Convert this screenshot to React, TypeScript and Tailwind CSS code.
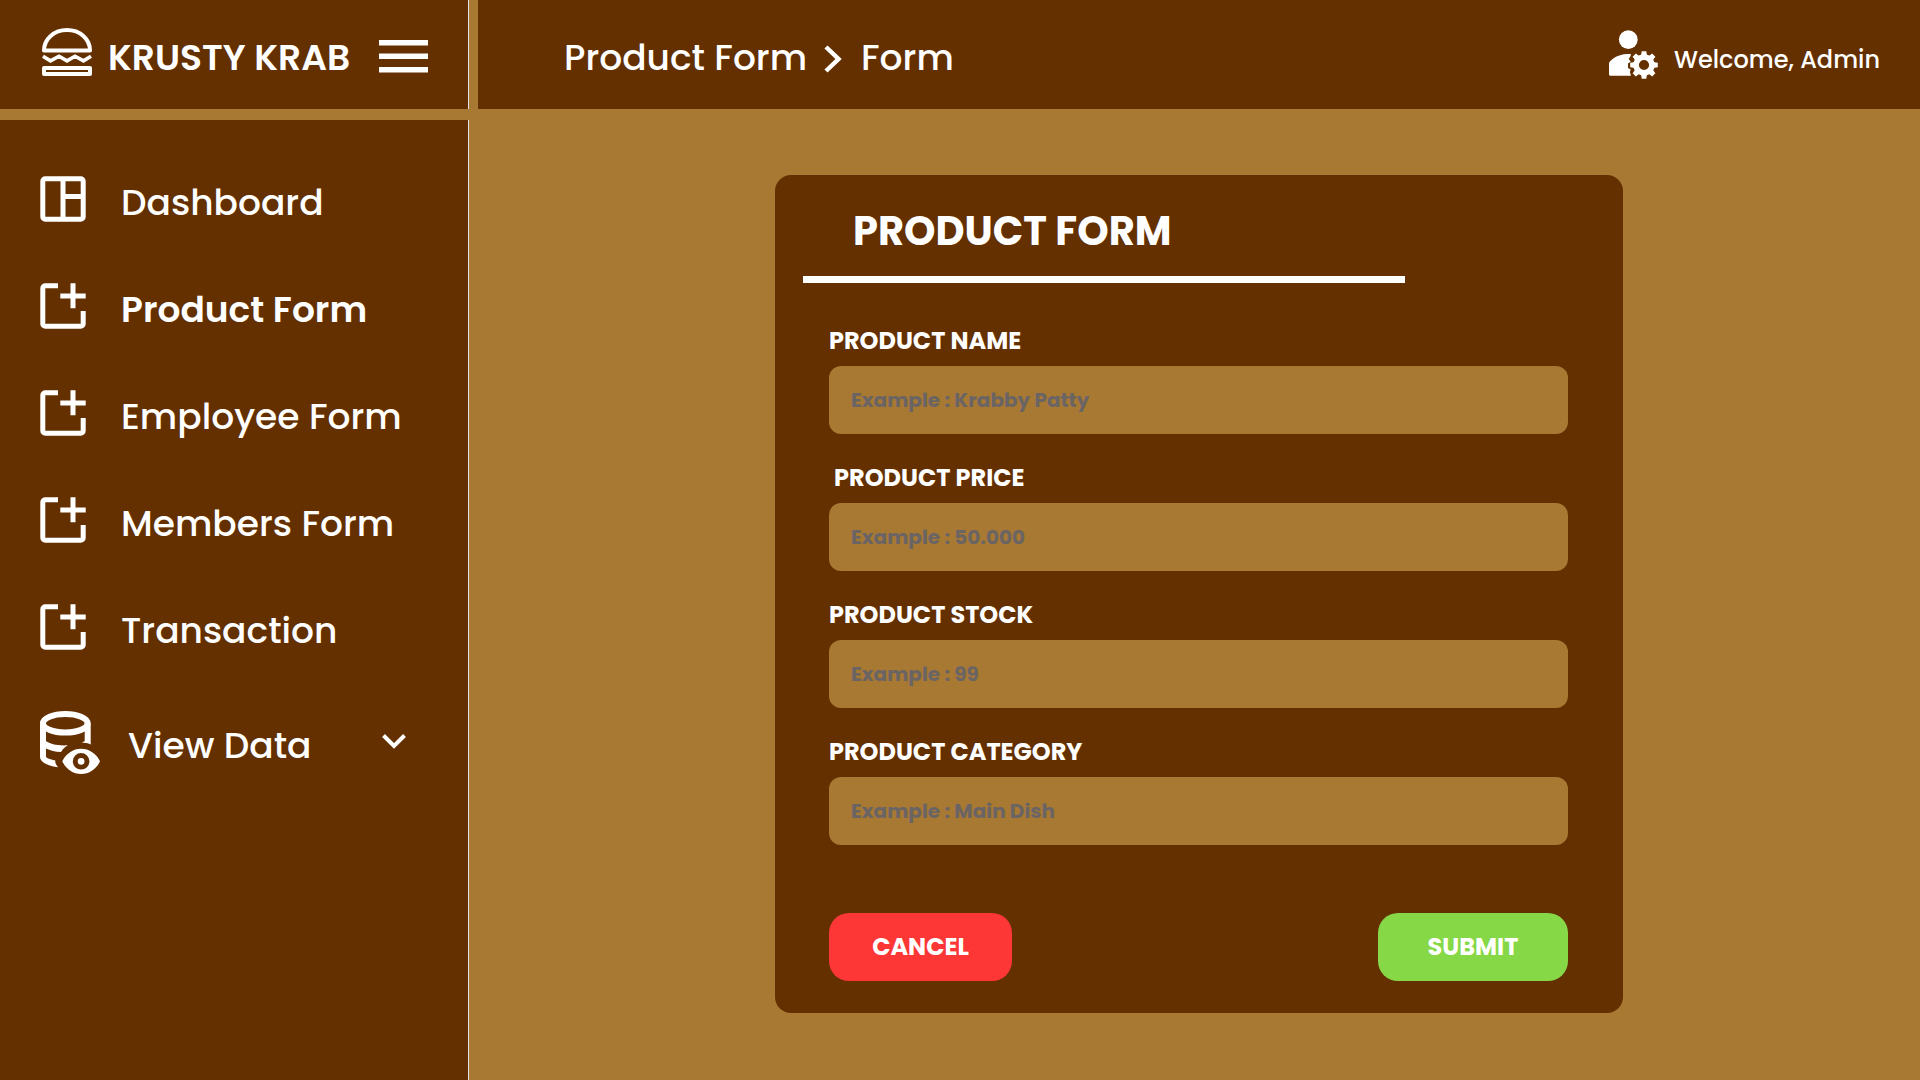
import React from 'react';

function BurgerLogo() {
  return (
    <svg className="mb-1.5 h-12 w-[50px] shrink-0" viewBox="0 0 50 48" fill="none" stroke="currentColor" strokeWidth="4" aria-hidden="true">
      <path d="M2 22.5C2 11 12 2 25 2s23 9 23 20.500Z" strokeLinejoin="round" />
      <path d="M1 28.200l7.500 4.600L17 28.200l8 4.600 8-4.600 8.500 4.600L49 28.200" strokeWidth="3.600" />
      <rect x="2" y="40" width="46" height="6" strokeLinejoin="round" />
    </svg>
  );
}

function MenuIcon() {
  return (
    <svg className="h-[33px] w-[49px]" viewBox="0 0 49 33" fill="currentColor" aria-hidden="true">
      <path d="M0 0h49v5.500H0zM0 13.500h49V19H0zM0 27h49v5.500H0z" />
    </svg>
  );
}

function DashboardIcon() {
  return (
    <svg className="size-[46px] shrink-0" viewBox="0 0 46 46" fill="none" stroke="currentColor" strokeWidth="5" aria-hidden="true">
      <rect x="2.800" y="2.800" width="40.400" height="40.400" rx="2.500" />
      <path d="M23 3v40M23 20.500h20" />
    </svg>
  );
}

function AddBoxIcon() {
  return (
    <svg className="size-[46px] shrink-0" viewBox="0 0 46 46" fill="none" stroke="currentColor" strokeWidth="5" aria-hidden="true">
      <path d="M18 2.800H5.300A2.500 2.500 0 0 0 2.800 5.300v35.400a2.500 2.500 0 0 0 2.500 2.500h35.400a2.500 2.500 0 0 0 2.500-2.500V28" />
      <path d="M33 .300v25M20.300 12.900h25.400" />
    </svg>
  );
}

function DatabaseEyeIcon() {
  return (
    <svg className="h-[63px] w-[60px] shrink-0" viewBox="0 0 60 63" fill="currentColor" aria-hidden="true">
      <ellipse cx="25.300" cy="12.300" rx="22.300" ry="9.300" fill="none" stroke="currentColor" strokeWidth="6" />
      <path d="M0 12h6v18c4 3 12 5 22 4.300-3 1.500-5 3.700-7 6.700-6-.2-11-1.500-15-3.500V46c2 1.700 5 2.700 9.300 3.400-.4 2 .7 4.300 2.700 6.800C7.500 55 0 51 0 46Z" />
      <path d="M44.700 12h6v21.400c-3-1.200-6-1.600-9-1.800 1.400-.6 2.300-1.100 3-1.600Z" />
      <path fillRule="evenodd" d="M22.300 50.300C26 42.500 33 37.700 41.100 37.700S56.300 42.500 60 50.300C56.300 58.100 49.200 63 41.100 63S26 58.100 22.300 50.300ZM41.100 42a8.300 8.300 0 1 0 0 16.600 8.300 8.300 0 0 0 0-16.600Zm0 4.900a3.400 3.400 0 1 1 0 6.800 3.400 3.400 0 0 1 0-6.800Z" />
    </svg>
  );
}

function AdminIcon() {
  return (
    <svg className="size-[49px] shrink-0" viewBox="0 0 49 49" fill="currentColor" aria-hidden="true">
      <circle cx="19.300" cy="9.600" r="9.400" />
      <path d="M0 33.500C0 31 8 24 18.500 24H22l-.6 2.600-1.700 2.200 2 3-2.700 1.700v4.600l2.700 1.400-.8 2.500 1.100 3.700H1.500Q0 45.700 0 44.200Z" />
      <circle cx="35" cy="35" r="7.900" fill="none" stroke="currentColor" strokeWidth="5.600" />
      {[0, 45, 90, 135, 180, 225, 270, 315].map((angle) => (
        <path key={angle} d="M32 26l.7-4.800h4.600L38 26Z" transform={`rotate(${angle} 35 35)`} />
      ))}
    </svg>
  );
}

const links = [
  { label: 'Dashboard', icon: <DashboardIcon /> },
  { label: 'Product Form', icon: <AddBoxIcon />, active: true },
  { label: 'Employee Form', icon: <AddBoxIcon /> },
  { label: 'Members Form', icon: <AddBoxIcon /> },
  { label: 'Transaction', icon: <AddBoxIcon /> },
];

const fields = [
  { id: 'name', label: 'PRODUCT NAME', placeholder: 'Example : Krabby Patty' },
  { id: 'price', label: ' PRODUCT PRICE', placeholder: 'Example : 50.000' },
  { id: 'stock', label: 'PRODUCT STOCK', placeholder: 'Example : 99' },
  { id: 'category', label: 'PRODUCT CATEGORY', placeholder: 'Example : Main Dish' },
];

export default function App() {
  return (
    <div className="flex min-h-screen gap-[9px] bg-[#a77933] font-['Poppins','Inter',sans-serif] font-medium text-white">
      <aside className="flex w-[469px] shrink-0 flex-col gap-[11px]">
        <div className="flex h-[109px] items-center border-r border-[#e2e2f0] bg-[#643000] pr-10 pl-[42px]">
          <BurgerLogo />
          <span className="ml-4 pt-1.5 text-4xl leading-9 font-semibold whitespace-nowrap">KRUSTY KRAB</span>
          <button type="button" aria-label="Toggle menu" className="mt-1 ml-auto">
            <MenuIcon />
          </button>
        </div>
        <nav className="flex flex-1 flex-col gap-[61px] border-r border-[#e2e2f0] bg-[#643000] pt-14 pr-[62px] pl-10">
          {links.map((link) => (
            <a key={link.label} href="#" className="flex items-center gap-[35px] whitespace-nowrap">
              {link.icon}
              <span className={link.active ? 'pt-2 text-4xl leading-9 font-semibold' : 'pt-2 text-4xl leading-9'}>
                {link.label}
              </span>
            </a>
          ))}
          <button type="button" aria-expanded="false" className="flex items-center gap-7 whitespace-nowrap">
            <DatabaseEyeIcon />
            <span className="pt-1.5 text-4xl leading-9">View Data</span>
            <svg className="mb-1 ml-auto h-4 w-6" viewBox="0 0 24 16" fill="none" stroke="currentColor" strokeWidth="4" aria-hidden="true">
              <path d="M1.500 2.500L12 13 22.500 2.500" />
            </svg>
          </button>
        </nav>
      </aside>

      <div className="flex min-w-0 flex-1 flex-col">
        <header className="flex h-[109px] items-center justify-between bg-[#643000] pr-10 pl-[86px]">
          <div className="flex items-center pt-1.5 text-4xl leading-9 whitespace-nowrap">
            <a href="#">Product Form</a>
            <svg className="mt-0.5 mr-[19px] ml-[17px] h-7 w-[18px]" viewBox="0 0 18 28" fill="none" stroke="currentColor" strokeWidth="4.500" aria-hidden="true">
              <path d="M2 2l12.500 12L2 26" />
            </svg>
            <span>Form</span>
          </div>
          <div className="flex items-center gap-4 whitespace-nowrap">
            <AdminIcon />
            <span className="pt-2.5 text-2xl leading-6">Welcome, Admin</span>
          </div>
        </header>

        <main className="flex justify-center pt-[66px] pb-16">
          <form className="w-[848px] rounded-2xl bg-[#643000] pt-9 pb-8 font-bold">
            <h1 className="ml-[78px] text-[40px] leading-10">PRODUCT FORM</h1>
            <div className="mt-[25px] ml-7 h-[7px] w-[602px] bg-white" />
            <div className="mt-[45px] flex flex-col gap-[31px] pr-[55px] pl-[54px]">
              {fields.map((field) => (
                <div key={field.id} className="flex flex-col gap-3">
                  <label htmlFor={field.id} className="text-2xl leading-[26px] whitespace-pre">
                    {field.label}
                  </label>
                  <input
                    id={field.id}
                    type="text"
                    placeholder={field.placeholder}
                    className="h-[68px] w-full rounded-xl bg-[#a77933] px-[22px] text-xl placeholder:text-[#6b6464]"
                  />
                </div>
              ))}
            </div>
            <div className="mt-[68px] flex justify-between pr-[55px] pl-[54px]">
              <button type="button" className="h-[68px] w-[183px] rounded-[20px] bg-[#fd3636] text-2xl">
                CANCEL
              </button>
              <button type="submit" className="h-[68px] w-[190px] rounded-[20px] bg-[#86d847] text-2xl">
                SUBMIT
              </button>
            </div>
          </form>
        </main>
      </div>
    </div>
  );
}
